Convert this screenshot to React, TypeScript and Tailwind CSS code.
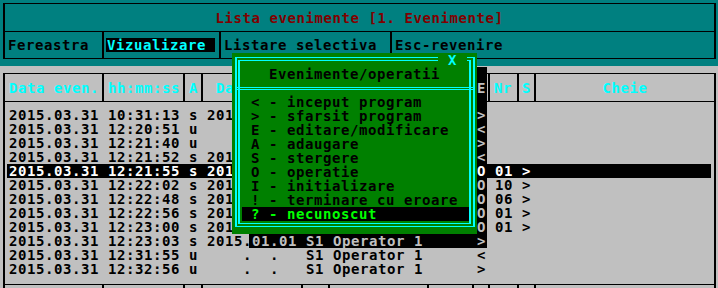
import React from "react";

type Row = { d: string; t: string; a: string; date: string; e: string; nr?: string; s2?: string; sel?: boolean };

const BLANK = "    .  .  ";
const rows: Row[] = [
  { d: "2015.03.31", t: "10:31:13", a: "s", date: "2015.01.01", e: ">" },
  { d: "2015.03.31", t: "12:20:51", a: "u", date: BLANK, e: "<" },
  { d: "2015.03.31", t: "12:21:40", a: "u", date: BLANK, e: ">" },
  { d: "2015.03.31", t: "12:21:52", a: "s", date: "2015.01.01", e: "<" },
  { d: "2015.03.31", t: "12:21:55", a: "s", date: "2015.01.01", e: "O", nr: "01", s2: ">", sel: true },
  { d: "2015.03.31", t: "12:22:02", a: "s", date: "2015.01.01", e: "O", nr: "10", s2: ">" },
  { d: "2015.03.31", t: "12:22:48", a: "s", date: "2015.01.01", e: "O", nr: "06", s2: ">" },
  { d: "2015.03.31", t: "12:22:56", a: "s", date: "2015.01.01", e: "O", nr: "01", s2: ">" },
  { d: "2015.03.31", t: "12:23:00", a: "s", date: "2015.01.01", e: "O", nr: "01", s2: ">" },
  { d: "2015.03.31", t: "12:23:03", a: "s", date: "2015.01.01", e: ">" },
  { d: "2015.03.31", t: "12:31:55", a: "u", date: BLANK, e: "<" },
  { d: "2015.03.31", t: "12:32:56", a: "u", date: BLANK, e: ">" },
];

const line = (r: Row) =>
  `${r.d} ${r.t} ${r.a} ${r.date} S1 Operator 1      ${r.e} ${r.nr ?? "  "} ${r.s2 ?? " "}`;

const items = [
  "< - inceput program",
  "> - sfarsit program",
  "E - editare/modificare",
  "A - adaugare",
  "S - stergere",
  "O - operatie",
  "I - initializare",
  "! - terminare cu eroare",
  "? - necunoscut",
];

// column index (0-based in string) : col n (1-based) -> index n-1
function RowText({ r, i }: { r: Row; i: number }) {
  const s = line(r);
  const shade = r.sel ? "text-white" : "text-[#c0c0c0]";
  if (i < 9) {
    // cols 26..52 are under the popup; col 53 under its shadow
    return (
      <>
        {s.slice(0, 25)}
        {" ".repeat(27)}
        <span className={shade}>{s.slice(52, 53)}</span>
        {s.slice(53)}
      </>
    );
  }
  if (i === 9) {
    return (
      <>
        {s.slice(0, 27)}
        <span className="text-[#c0c0c0]">{s.slice(27, 53)}</span>
        {s.slice(53)}
      </>
    );
  }
  return <>{s}</>;
}

function ColCells({ labels }: { labels?: boolean }) {
  return (
    <>
      <div className="w-[97px] shrink-0 flex items-center pl-[4px]">{labels ? "Data even." : ""}</div>
      <div className="w-[81px] shrink-0 border-l-2 border-black flex items-center pl-[4px]">{labels ? "hh:mm:ss" : ""}</div>
      <div className="w-[18px] shrink-0 border-l-2 border-black flex items-center pl-[4px]">{labels ? "A" : ""}</div>
      <div className="w-[100px] shrink-0 border-l-2 border-black flex items-center pl-[13px]">{labels ? "Da" : ""}</div>
      <div className="w-[27px] shrink-0 border-l-2 border-black" />
      <div className="w-[99px] shrink-0 border-l-2 border-black" />
      <div className="w-[45px] shrink-0 border-l-2 border-black" />
      <div className="w-[16px] shrink-0 border-l-2 border-black flex items-center pl-[3px] text-[#c0c0c0]">{labels ? "E" : ""}</div>
      <div className="w-[29px] shrink-0 border-l-2 border-black flex items-center pl-[4px]">{labels ? "Nr" : ""}</div>
      <div className="w-[17px] shrink-0 border-l-2 border-black flex items-center pl-[3px]">{labels ? "S" : ""}</div>
      <div className="flex-1 border-l-2 border-black flex items-center justify-center">{labels ? "Cheie" : ""}</div>
    </>
  );
}

export default function App() {
  return (
    <div className="relative w-[718px] h-[288px] overflow-hidden bg-[#c0c0c0] font-['DejaVu_Sans_Mono',monospace] font-bold text-[14px] leading-[14px] tracking-[0.57px] text-black">
      {/* shadow of the popup (painted beneath the table text) */}
      <div className="absolute left-[477px] top-[67px] w-[10px] h-[181px] bg-black" />
      <div className="absolute left-[249px] top-[234px] w-[238px] h-[14px] bg-black" />

      {/* top teal area */}
      <div className="bg-[#008080] h-[66px] pt-[3px] pl-[3px]">
        <div className="w-[713px] border-x-2 border-y border-black">
          <div className="h-[27px] flex items-center justify-center text-[#800000] whitespace-pre">
            Lista evenimente [1. Evenimente]
          </div>
          <div className="h-[27px] border-t border-black flex items-stretch whitespace-pre">
            <div className="w-[97px] flex items-center pl-[3px]">Fereastra</div>
            <div className="w-[117px] border-l-2 border-black flex items-center pl-[2px]">
              <span className="bg-black text-[#00ffff] h-[14px] pl-[1px]">Vizualizare </span>
            </div>
            <div className="w-[171px] border-l-2 border-black flex items-center pl-[3px]">Listare selectiva</div>
            <div className="flex-1 border-l-2 border-black flex items-center pl-[3px]">Esc-revenire</div>
          </div>
        </div>
      </div>

      {/* table */}
      <div className="relative pt-[7px] pl-[3px]">
        <div className="w-[713px] h-[29px] border-x-2 border-y border-black flex items-stretch text-[#00ffff] whitespace-pre">
          <ColCells labels />
        </div>
        <div className="w-[713px] border-x-2 border-black pt-[6px] pb-[8px]">
          {rows.map((r, i) => (
            <div
              key={i}
              className={`ml-[2px] mr-[3px] pl-[2px] h-[14px] whitespace-pre ${r.sel ? "bg-black text-white" : ""}`}
            >
              <RowText r={r} i={i} />
            </div>
          ))}
        </div>
        <div className="w-[713px] h-[20px] border-x-2 border-t border-black flex items-stretch">
          <ColCells />
        </div>
      </div>

      {/* popup */}
      <div className="absolute left-[232px] top-[53px] w-[245px] h-[181px] bg-[#008000] pl-[3px] pt-[4px] pr-[2px] pb-[7px]">
        <div className="h-full border-x-2 border-y border-[#00ffff] pl-[1px] pt-[2px] pr-[2px] pb-[2px]">
          <div className="h-full border-x-2 border-y border-[#00ffff] flex flex-col">
            <div className="h-[26px] flex items-center justify-center whitespace-pre">Evenimente/operatii</div>
            <div className="h-[3px] border-y border-[#00ffff] -ml-[5px] -mr-[6px]" />
            <div className="mt-[5px]">
              {items.map((it, i) => (
                <div
                  key={i}
                  className={`h-[14px] ml-[2px] pl-[9px] whitespace-pre ${
                    i === items.length - 1 ? "bg-black text-[#00ff00]" : ""
                  }`}
                >
                  {it}
                </div>
              ))}
            </div>
          </div>
        </div>
        <div className="absolute left-[206px] top-[2px] w-[29px] h-[10px] bg-[#008000] text-[#00ffff] flex items-center justify-center leading-[10px]">
          X
        </div>
      </div>
    </div>
  );
}
